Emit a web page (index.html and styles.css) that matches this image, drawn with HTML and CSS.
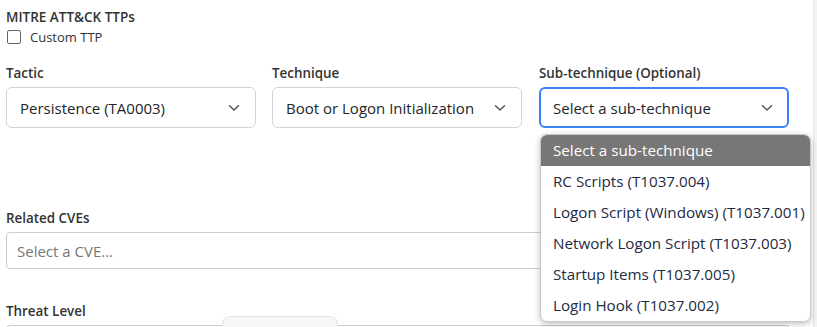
FILE: index.html
```html
<!DOCTYPE html>
<html>
<head>
<meta charset="utf-8">
<link rel="stylesheet" href="styles.css">
</head>
<body>
<div class="page">
  <div class="form">
    <section class="ttp">
      <div class="section-title">MITRE ATT&amp;CK TTPs</div>
      <label class="check"><span class="box"></span><span>Custom TTP</span></label>
      <div class="grid">
        <div class="field">
          <div class="label">Tactic</div>
          <div class="select"><span>Persistence (TA0003)</span><svg class="chev" width="12" height="8" viewBox="0 0 12 8"><path d="M1.5 1.8 6 6 10.5 1.8" fill="none" stroke="#555" stroke-width="1.5" stroke-linecap="round" stroke-linejoin="round"/></svg></div>
        </div>
        <div class="field">
          <div class="label">Technique</div>
          <div class="select"><span>Boot or Logon Initialization</span><svg class="chev" width="12" height="8" viewBox="0 0 12 8"><path d="M1.5 1.8 6 6 10.5 1.8" fill="none" stroke="#555" stroke-width="1.5" stroke-linecap="round" stroke-linejoin="round"/></svg></div>
        </div>
        <div class="field sub">
          <div class="label">Sub-technique (Optional)</div>
          <div class="select focus"><span>Select a sub-technique</span><svg class="chev" width="12" height="8" viewBox="0 0 12 8"><path d="M1.5 1.8 6 6 10.5 1.8" fill="none" stroke="#555" stroke-width="1.5" stroke-linecap="round" stroke-linejoin="round"/></svg></div>
          <ul class="menu">
            <li class="active">Select a sub-technique</li>
            <li>RC Scripts (T1037.004)</li>
            <li>Logon Script (Windows) (T1037.001)</li>
            <li>Network Logon Script (T1037.003)</li>
            <li>Startup Items (T1037.005)</li>
            <li>Login Hook (T1037.002)</li>
          </ul>
        </div>
      </div>
    </section>
    <section class="cves">
      <div class="label">Related CVEs</div>
      <div class="input placeholder">Select a CVE...</div>
    </section>
    <section class="threat">
      <div class="label">Threat Level</div>
      <div class="input"></div>
    </section>
  </div>
  <div class="pill"></div>
  <div class="scroll"></div>
</div>
</body>
</html>
```
FILE: styles.css
```css
* { box-sizing: border-box; }
html, body { margin: 0; padding: 0; background: #fff; }
body { font-family: "Open Sans", "Noto Sans", sans-serif; color: #212529; overflow: hidden; }
.page { position: relative; width: 817px; height: 327px; overflow: hidden; }
.form { padding: 7px 27px 0 6px; }
.section-title { font-size: 13.5px; font-weight: 600; color: #333; line-height: 20px; }
.check { display: flex; align-items: center; gap: 9px; font-size: 13px; color: #333; line-height: 20px; margin-left: 1px; }
.box { width: 14px; height: 14px; border: 1px solid #666; border-radius: 2px; background: #fff; }
.grid { display: grid; grid-template-columns: 250px 250px 251px; column-gap: 16px; margin-top: 16px; }
.grid .field:nth-child(3) { margin-left: 1px; }
.field { position: relative; }
.label { font-size: 13.4px; font-weight: 600; color: #333; line-height: 20px; margin-bottom: 4px; }
.select { height: 41px; border: 1px solid #ced4da; border-radius: 6px; display: flex; align-items: center; justify-content: space-between; padding: 0 15px 0 13px; font-size: 15px; color: #212529; }
.select.focus { border: 2px solid #3b82f6; padding-left: 12px; padding-right: 14px; }
.chev { flex: none; }
.menu { position: absolute; left: 1px; top: 71px; width: 271px; margin: 0; padding: 0; list-style: none; background: #fff; border: 1px solid #c8c8c8; border-radius: 7px; box-shadow: 0 2px 6px rgba(0,0,0,0.25); overflow: hidden; z-index: 5; }
.menu li { height: 31px; line-height: 31px; padding-left: 12px; font-size: 15.2px; color: #1e2a44; white-space: nowrap; }
.menu li.active { background: #777; color: #fff; }
.cves { margin-top: 80px; }
.input { height: 37px; border: 1px solid #ccc; border-radius: 4px; padding: 0 10px; display: flex; align-items: center; font-size: 15px; }
.placeholder { color: #777; }
.threat { margin-top: 32px; }
.threat .input { border-radius: 4px 4px 0 0; }
.pill { position: absolute; left: 222px; top: 316px; width: 116px; height: 30px; background: #f7f7f7; border: 1px solid #e3e3e3; border-radius: 8px; }
.scroll { position: absolute; top: 0; right: 0; width: 4px; height: 327px; background: #f3f3f3; border-left: 1px solid #e6e6e6; }
```
